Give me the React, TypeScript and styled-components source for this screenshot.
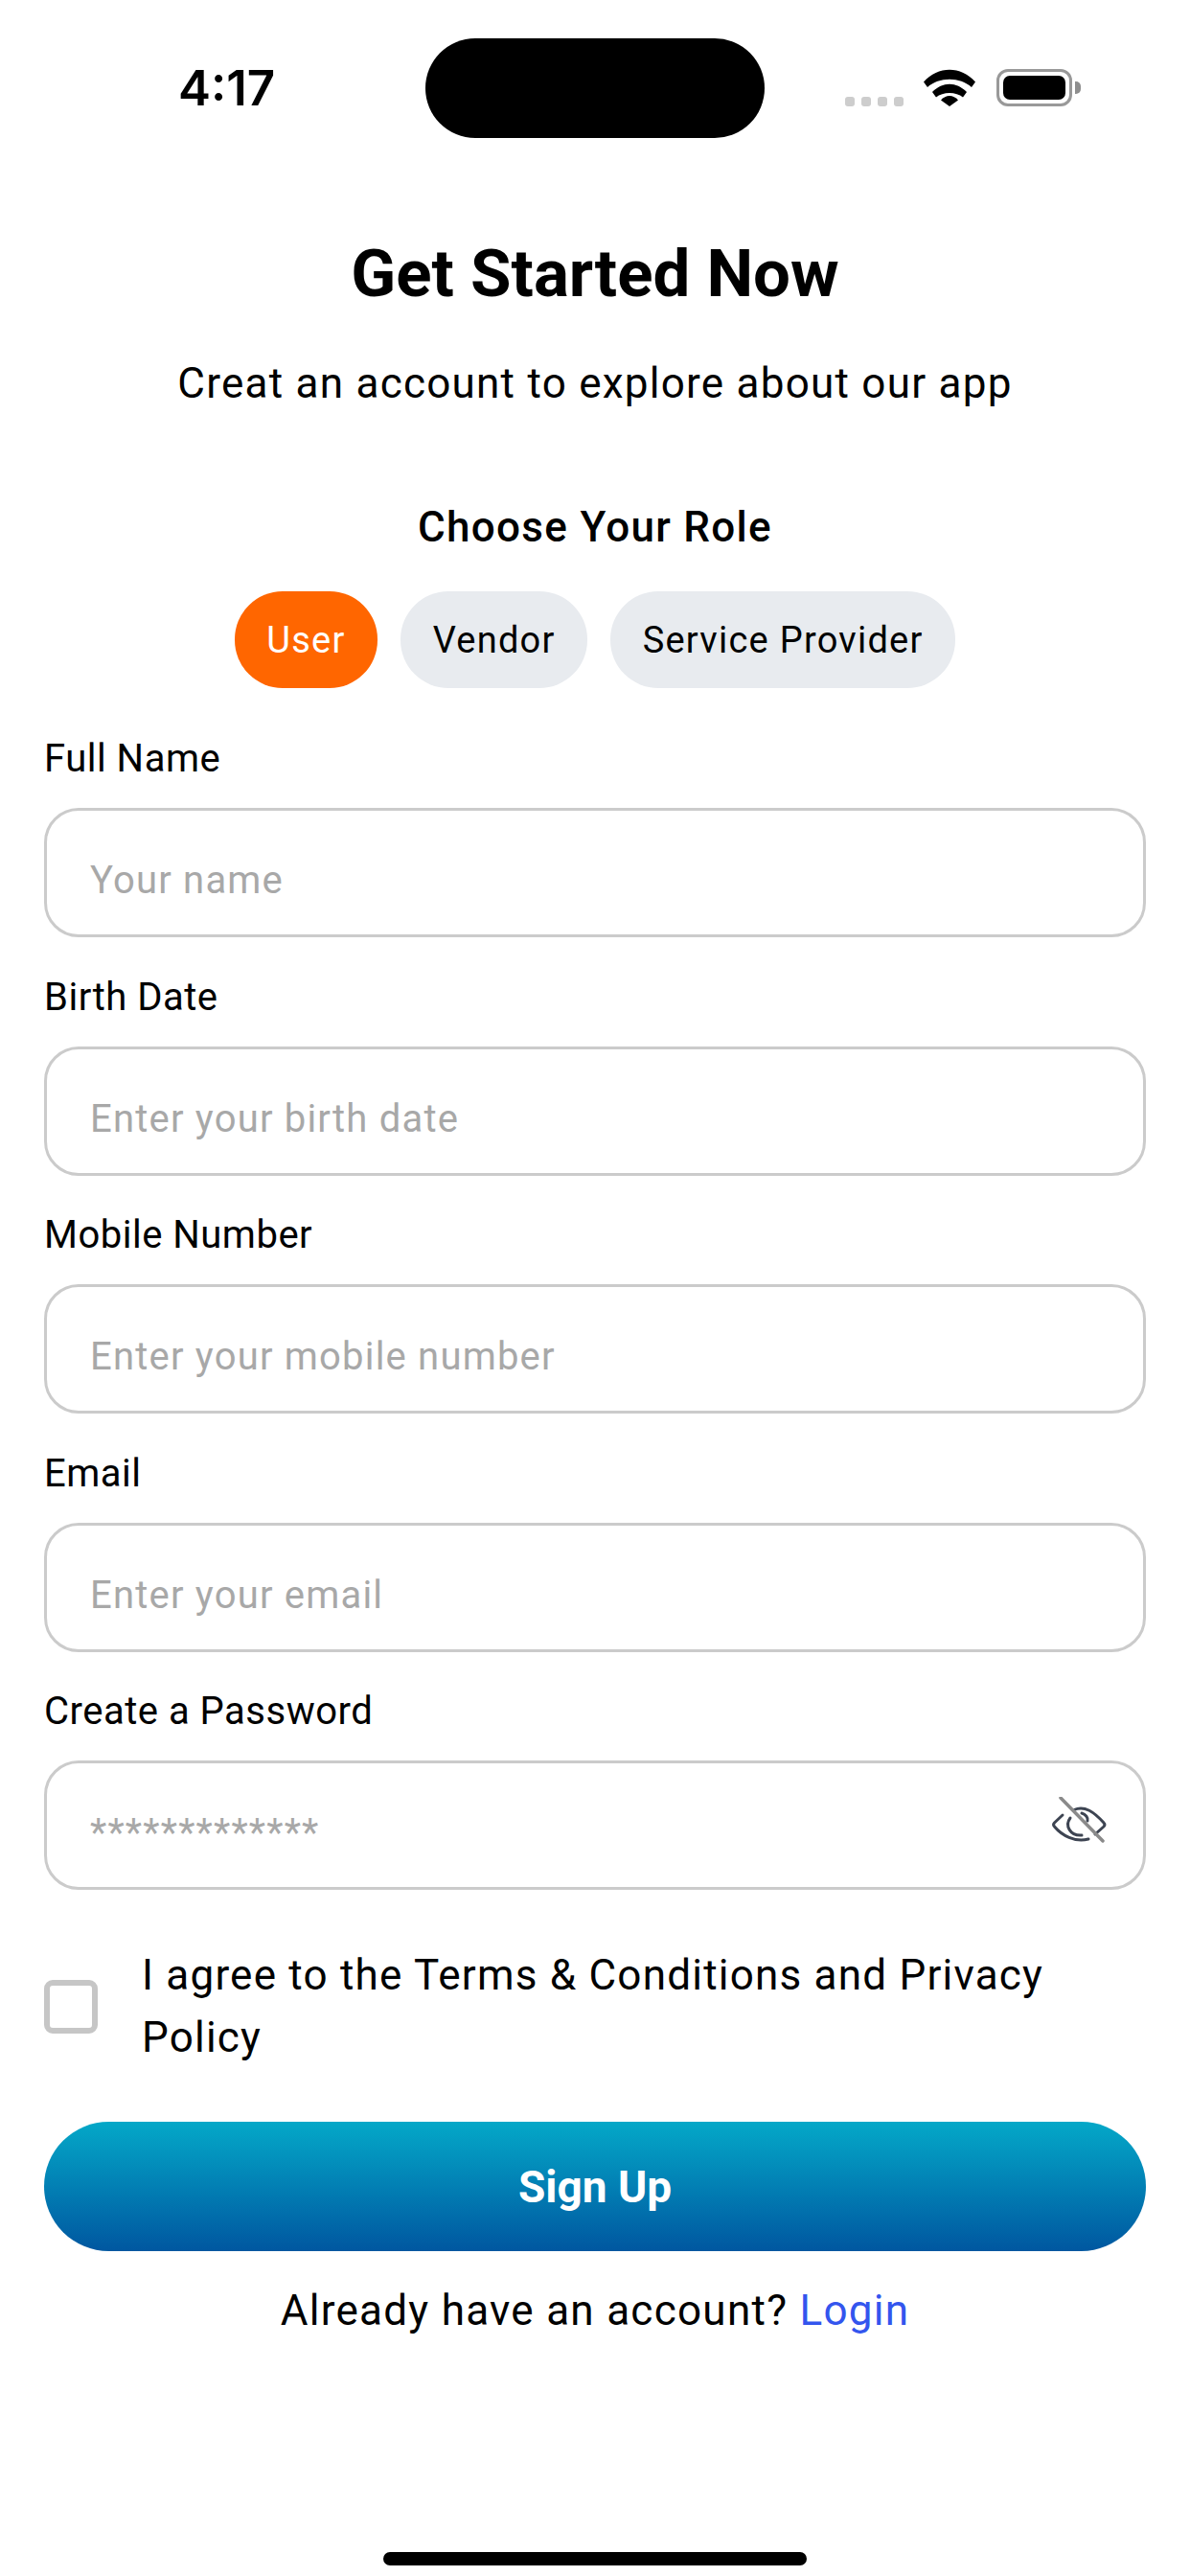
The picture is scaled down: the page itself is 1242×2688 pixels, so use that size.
import * as React from 'react';
import styled, { createGlobalStyle } from 'styled-components';

const GlobalStyle = createGlobalStyle`
  html, body {
    margin: 0;
    padding: 0;
    background: #fff;
  }
  * {
    box-sizing: border-box;
  }
`;

const Screen = styled.div`
  width: 1242px;
  height: 2688px;
  display: flex;
  flex-direction: column;
  background: #fff;
  color: #000;
  font-family: Roboto, 'Liberation Sans', sans-serif;
  overflow: hidden;
`;

const StatusBar = styled.div`
  display: flex;
  align-items: flex-start;
  height: 144px;
  padding-top: 40px;
`;

const Time = styled.div`
  width: 444px;
  padding-left: 186px;
  padding-top: 22px;
  font-family: Inter, sans-serif;
  font-size: 51px;
  line-height: 60px;
  font-weight: 600;
`;

const Island = styled.div`
  width: 354px;
  height: 104px;
  border-radius: 52px;
  background: #000;
`;

const StatusIcons = styled.div`
  display: flex;
  align-items: flex-end;
  margin-top: 32px;
  padding-left: 84px;
  height: 39px;
`;

const SignalDots = styled.div`
  display: flex;
  gap: 7px;
  margin-right: 21px;
`;

const SignalDot = styled.span`
  width: 10px;
  height: 10px;
  border-radius: 3px;
  background: #cdcdcd;
`;

const Battery = styled.div`
  display: flex;
  align-items: center;
  margin-left: 22px;
`;

const BatteryBody = styled.div`
  width: 79px;
  height: 39px;
  padding: 4px;
  border: 3px solid #999;
  border-radius: 12px;
`;

const BatteryFill = styled.div`
  width: 100%;
  height: 100%;
  border-radius: 7px;
  background: #000;
`;

const BatteryNub = styled.div`
  width: 6px;
  height: 13px;
  margin-left: 3px;
  border-radius: 0 5px 5px 0;
  background: #8e8e8e;
`;

const Title = styled.h1`
  margin: 100px 0 0;
  text-align: center;
  font-size: 69px;
  line-height: 84px;
  font-weight: 700;
`;

const Subtitle = styled.p`
  margin: 42px 0 0;
  text-align: center;
  font-size: 44px;
  line-height: 60px;
  letter-spacing: 1.25px;
`;

const RoleHeading = styled.h2`
  margin: 92px 0 0;
  text-align: center;
  font-size: 44px;
  line-height: 56px;
  font-weight: 500;
  letter-spacing: 1.3px;
`;

const RoleRow = styled.div`
  display: flex;
  justify-content: center;
  gap: 24px;
  margin-top: 39px;
`;

const RoleChip = styled.button<{ $active?: boolean }>`
  height: 101px;
  padding: 0 33.5px;
  border: 0;
  border-radius: 50px;
  background: ${(p) => (p.$active ? '#ff6600' : '#e8ebef')};
  color: ${(p) => (p.$active ? '#fff' : '#000')};
  font-family: inherit;
  font-size: 38px;
  letter-spacing: 1.25px;
`;

const Form = styled.form`
  display: flex;
  flex-direction: column;
  gap: 37.6px;
  margin-top: 49px;
  padding: 0 46px;
`;

const Field = styled.label`
  display: flex;
  flex-direction: column;
  gap: 26px;
`;

const FieldLabel = styled.span`
  font-size: 40px;
  line-height: 50px;
  letter-spacing: 0.5px;
`;

const InputBox = styled.div`
  display: flex;
  align-items: center;
  height: 135px;
  padding: 0 37px 0 45px;
  border: 3px solid #cbcbcb;
  border-radius: 36px;
`;

const Input = styled.input`
  flex: 1;
  min-width: 0;
  border: 0;
  outline: 0;
  padding: 16px 0 0;
  background: transparent;
  font-family: inherit;
  font-size: 40px;
  letter-spacing: 1.2px;
  color: #000;

  &::placeholder {
    color: #a8a8a8;
    opacity: 1;
  }
`;

const AgreeRow = styled.div`
  display: flex;
  align-items: center;
  gap: 46px;
  margin: 57px 46px 0;
`;

const CheckBox = styled.span`
  flex: none;
  width: 56px;
  height: 56px;
  border: 6px solid #c6c6c6;
  border-radius: 9px;
`;

const AgreeText = styled.span`
  font-size: 44px;
  line-height: 65px;
  letter-spacing: 1.22px;
`;

const SignUpButton = styled.button`
  display: block;
  height: 135px;
  margin: 55px 46px 0;
  border: 0;
  border-radius: 68px;
  background: linear-gradient(180deg, #04a8c8 0%, #0057a0 100%);
  color: #fff;
  font-family: inherit;
  font-size: 46px;
  font-weight: 700;
`;

const LoginLine = styled.p`
  margin: 32px 0 0;
  text-align: center;
  font-size: 44px;
  line-height: 60px;
  letter-spacing: 1.28px;
`;

const LoginLink = styled.a`
  color: #3355ee;
`;

const HomeIndicator = styled.div`
  flex: none;
  width: 442px;
  height: 14px;
  margin: auto auto 11px;
  border-radius: 7px;
  background: #000;
`;

function WifiIcon() {
  return (
    <svg width="54" height="39" viewBox="0 0 54 39">
      <path d="M0 13.5 L4 19 C16 8 38 8 50 19 L54 13.5 C39 -3.5 15 -3.5 0 13.5 Z" fill="#000" />
      <path d="M9 24 L13 29.5 C20 23.5 34 23.5 41 29.5 L45 24 C34 13 20 13 9 24 Z" fill="#000" />
      <path d="M18 32.5 L27 39 L36 32.5 C31 26.5 23 26.5 18 32.5 Z" fill="#000" />
    </svg>
  );
}

function EyeOffIcon() {
  return (
    <svg width="60" height="60" viewBox="0 2 60 60" fill="none">
      <g stroke="#3d4452" strokeWidth="3" strokeLinecap="round" strokeLinejoin="round">
        <path d="M13 21 L4.5 29 Q2.5 31 4.5 33 C12 42 26 50 40 46" />
        <path d="M25 15.5 C36 10.5 46 18 56 29 Q58 31 56 33 L47 41" />
        <path d="M21 24 C15 32 21 43 33 42" />
        <path d="M33 19 C37 20 40 24 39 27" />
      </g>
      <path d="M11 3 L55 48" stroke="#8a8a8a" strokeWidth="3.5" strokeLinecap="round" />
    </svg>
  );
}

const fields = [
  { label: 'Full Name', placeholder: 'Your name' },
  { label: 'Birth Date', placeholder: 'Enter your birth date' },
  { label: 'Mobile Number', placeholder: 'Enter your mobile number' },
  { label: 'Email', placeholder: 'Enter your email' },
];

export default function App() {
  return (
    <Screen>
      <GlobalStyle />
      <StatusBar>
        <Time>4:17</Time>
        <Island />
        <StatusIcons>
          <SignalDots>
            <SignalDot />
            <SignalDot />
            <SignalDot />
            <SignalDot />
          </SignalDots>
          <WifiIcon />
          <Battery>
            <BatteryBody>
              <BatteryFill />
            </BatteryBody>
            <BatteryNub />
          </Battery>
        </StatusIcons>
      </StatusBar>

      <Title>Get Started Now</Title>
      <Subtitle>Creat an account to explore about our app</Subtitle>

      <RoleHeading>Choose Your Role</RoleHeading>
      <RoleRow>
        <RoleChip type="button" $active>
          User
        </RoleChip>
        <RoleChip type="button">Vendor</RoleChip>
        <RoleChip type="button">Service Provider</RoleChip>
      </RoleRow>

      <Form>
        {fields.map((field) => (
          <Field key={field.label}>
            <FieldLabel>{field.label}</FieldLabel>
            <InputBox>
              <Input placeholder={field.placeholder} />
            </InputBox>
          </Field>
        ))}
        <Field>
          <FieldLabel>Create a Password</FieldLabel>
          <InputBox>
            <Input placeholder="*************" />
            <EyeOffIcon />
          </InputBox>
        </Field>
      </Form>

      <AgreeRow>
        <CheckBox />
        <AgreeText>I agree to the Terms &amp; Conditions and Privacy Policy</AgreeText>
      </AgreeRow>

      <SignUpButton type="button">Sign Up</SignUpButton>

      <LoginLine>
        Already have an account? <LoginLink>Login</LoginLink>
      </LoginLine>

      <HomeIndicator />
    </Screen>
  );
}
